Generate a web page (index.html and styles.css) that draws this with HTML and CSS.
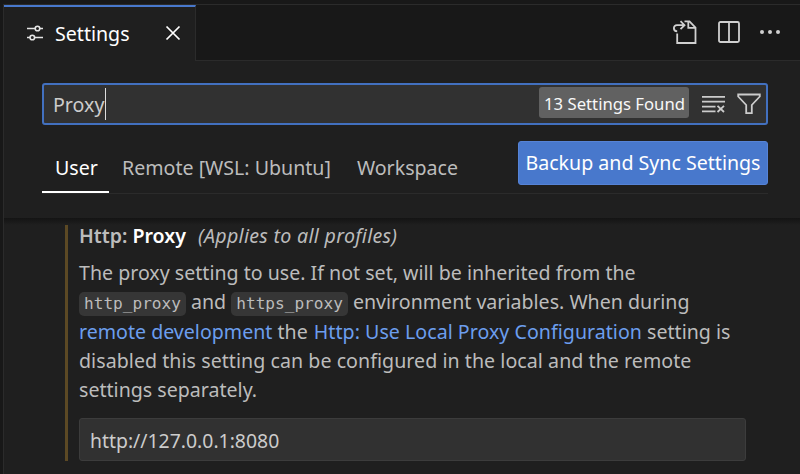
FILE: index.html
```
<!DOCTYPE html>
<html lang="en">
<head>
<meta charset="utf-8">
<title>Settings</title>
<link rel="stylesheet" href="styles.css">
</head>
<body>
<div class="window">
  <header class="tabbar">
    <div class="tab">
      <svg class="tab-icon" width="18" height="18" viewBox="0 0 18 18" fill="none" stroke="currentColor" stroke-width="1.600">
        <path d="M1 4.500H9M14 4.500H17M1 13.500H4M8.500 13.500H17"/><circle cx="11.500" cy="4.500" r="2.300"/><circle cx="6.300" cy="13.500" r="2.300"/>
      </svg>
      <span class="tab-title">Settings</span>
      <svg class="close" width="16" height="16" viewBox="0 0 16 16" fill="none" stroke="currentColor" stroke-width="1.700"><path d="M1.500 1.500L14.500 14.500M14.500 1.500L1.500 14.500"/></svg>
    </div>
    <div class="actions">
      <svg width="26" height="26" viewBox="0 0 26 26" fill="none" stroke="currentColor" stroke-width="1.800">
        <path d="M5.200 14.500V24H23.500V8.500L17.500 2.300H12.500M16.300 2.500V8.800H23.500M5.200 12.300C.8 12 .8 6.200 5 6.200H11.500M8.500 2.200L12.500 6.200L8.500 10.200"/>
      </svg>
      <svg width="22" height="22" viewBox="0 0 22 22" fill="none" stroke="currentColor" stroke-width="1.800">
        <rect x="1" y="1" width="20" height="20" rx="1.500"/><path d="M11 1V21"/>
      </svg>
      <svg width="22" height="22" viewBox="0 0 22 22" fill="currentColor">
        <circle cx="3" cy="11" r="2"/><circle cx="11" cy="11" r="2"/><circle cx="19" cy="11" r="2"/>
      </svg>
    </div>
  </header>
  <section class="head">
    <div class="search">
      <span class="query">Proxy</span><span class="caret"></span>
      <span class="count">13 Settings Found</span>
      <svg class="clear" width="24" height="18" viewBox="0 0 24 18" fill="none" stroke="currentColor" stroke-width="1.800">
        <path d="M0 1.800H23M0 6.600H23M0 11.600H13.500M0 16.300H13.500M15.500 10.800L22 17M22 10.800L15.500 17"/>
      </svg>
      <svg class="filter" width="24" height="22" viewBox="0 0 24 22" fill="none" stroke="currentColor" stroke-width="1.800">
        <path d="M1.200 1.500H22.800V3.500L14.800 12V20.200H9.200V12L1.200 3.500Z"/>
      </svg>
    </div>
    <nav class="scopes">
      <span class="scope active">User</span>
      <span class="scope">Remote [WSL: Ubuntu]</span>
      <span class="scope">Workspace</span>
      <button class="sync">Backup and Sync Settings</button>
    </nav>
  </section>
  <main class="body">
    <article class="setting">
      <h3 class="name"><span class="cat">Http:</span><span class="key">Proxy</span><em class="note">(Applies to all profiles)</em></h3>
      <p class="desc">The proxy setting to use. If not set, will be inherited from the<br><code>http_proxy</code> and <code>https_proxy</code> environment variables. When during<br><a>remote development</a> the <a class="loose">Http: Use Local Proxy Configuration</a> setting is<br><span class="wide">disabled this setting can be configured in the local and the remote</span><br>settings separately.</p>
      <div class="value">http://127.0.0.1:8080</div>
    </article>
  </main>
</div>
</body>
</html>
```
FILE: styles.css
```
* { box-sizing: border-box; }
body {
  margin: 0;
  background: #181818;
  color: #bcbcbc;
  font: 19.6px/29.3px "Noto Sans", sans-serif;
}
svg { display: block; flex: none; }
.window {
  height: 474px;
  padding: 4px 0 0 3px;
  overflow: hidden;
  display: flex;
  flex-direction: column;
}
.tabbar {
  height: 57px;
  flex: none;
  display: flex;
  border-top: 1px solid #2b2b2b;
  border-left: 1px solid #2b2b2b;
  background: #181818;
}
.tab {
  width: 192px;
  display: flex;
  align-items: center;
  padding: 0 15px 0 22px;
  background: #1f1f1f;
  border-top: 2px solid #4878cc;
  border-right: 1px solid #2b2b2b;
  color: #fff;
}
.tab-icon { color: #e4e4e4; margin-top: -2px; }
.tab-title { font-size: 19.6px; margin: 0 0 0 11px; }
.close { margin: -3px -1px 0 auto; }
.actions {
  flex: 1;
  display: flex;
  align-items: center;
  justify-content: flex-end;
  gap: 20px;
  padding: 0 19px 2px 0;
  border-bottom: 1px solid #2b2b2b;
  color: #d0d0d0;
}
.actions svg:nth-child(2) { margin-right: -1px; }
.head {
  height: 157px;
  flex: none;
  padding: 22px 32px 0 38px;
  background: #1f1f1f;
  border-left: 1px solid #2b2b2b;
}
.search {
  height: 42px;
  display: flex;
  align-items: center;
  padding: 0 5px 0 9px;
  background: #313131;
  border: 2px solid #4270bf;
  border-radius: 3px;
  color: #ccc;
}
.query { padding-top: 1px; }
.caret { width: 1px; height: 32px; margin-left: 1px; background: #ddd; }
.count {
  height: 31px;
  margin: -3px 13px 0 auto;
  padding: 0 4px 0 5px;
  border-radius: 3px;
  background: #616161;
  color: #f8f8f8;
  font-size: 16.7px;
  line-height: 33px;
}
.clear { margin-right: 11px; }
.scopes {
  height: 69px;
  display: flex;
  align-items: flex-end;
  border-bottom: 1px solid #2b2b2b;
}
.scope {
  height: 49px;
  padding: 10px 13px 0;
  line-height: 28px;
}
.active {
  color: #fff;
  width: 67px;
  border-bottom: 2px solid #fff;
}
.sync {
  width: 250px;
  height: 44px;
  margin: 0 0 8px auto;
  padding: 0;
  border: 1px solid #5683d6;
  border-radius: 3px;
  background: #4878cc;
  color: #fff;
  font: inherit;
  white-space: nowrap;
}
.body {
  flex: 1;
  padding: 7px 54px 0 61px;
  background: linear-gradient(#141414, #1a1a1a 4px, #1f1f1f 7px);
  border-left: 1px solid #2b2b2b;
}
.setting {
  height: 236px;
  padding-left: 11px;
  border-left: 3px solid #5c4924;
}
.name {
  display: flex;
  height: 33px;
  margin: 0;
  padding-bottom: 4px;
  font-size: 19.6px;
  font-weight: 600;
  line-height: 22px;
}
.key { color: #fff; margin-left: 5px; }
.note { font-weight: 400; margin-left: 12px; letter-spacing: 0.3px; }
.desc { margin: 0; height: 160px; white-space: nowrap; }
.desc a { color: #6c9eee; }
.loose { margin-left: 1px; letter-spacing: 0.03px; }
.wide { letter-spacing: 0.05px; }
code {
  padding: 2px 5px 3px;
  border-radius: 5px;
  background: #363636;
  font: 16.1px/1 "DejaVu Sans Mono", monospace;
}
.value {
  height: 43px;
  padding: 0 10px;
  border: 1px solid #3c3c3c;
  border-radius: 3px;
  background: #313131;
  color: #ccc;
  font-size: 19.4px;
  line-height: 43px;
}
```
